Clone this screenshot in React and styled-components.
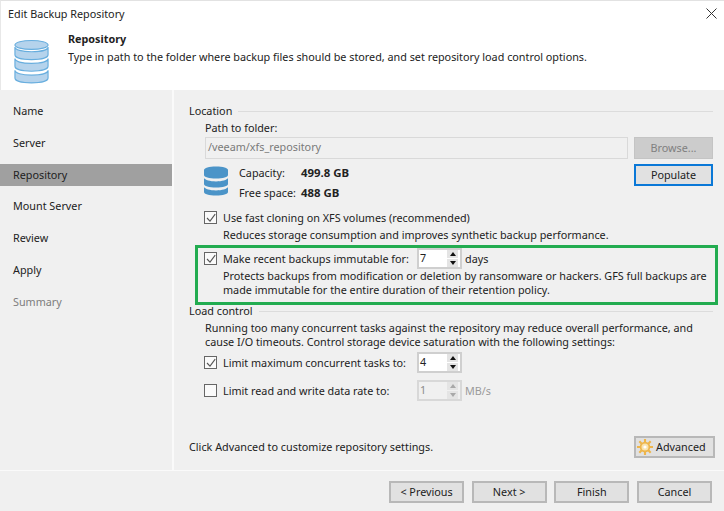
import React from "react"
import styled, { createGlobalStyle } from "styled-components"

const steps = ["Name", "Server", "Repository", "Mount Server", "Review", "Apply", "Summary"]

const DbIcon = () => (
  <svg width="37" height="45" viewBox="0 0 38 46">
    <g fill="#b5d3ec" stroke="#68aede" strokeWidth="1.2">
      <path d="M2 32v8c0 3 7 5 17 5s17-2 17-5v-8c0 3-7 5-17 5S2 35 2 32z" />
      <path d="M2 20v8c0 3 7 5 17 5s17-2 17-5v-8c0 3-7 5-17 5S2 23 2 20z" />
      <path d="M2 8v8c0 3 7 5 17 5s17-2 17-5V8c0 3-7 5-17 5S2 11 2 8z" />
      <ellipse cx="19" cy="6" rx="17" ry="4.6" />
    </g>
  </svg>
)

const SmallDb = () => (
  <svg width="24" height="30" viewBox="0 0 24 30">
    <g fill="#4b94c8">
      <path d="M0 21v5c0 2 5 3.6 12 3.6S24 28 24 26v-5c-1 2-6 3.4-12 3.4S1 23 0 21z" />
      <path d="M0 12v6c0 2 5 3.6 12 3.6S24 20 24 18v-6c-1 2-6 3.4-12 3.4S1 14 0 12z" />
      <path d="M0 4v5c0 2 5 3.6 12 3.6S24 11 24 9V4c0-2-5-3.6-12-3.6S0 2 0 4z" />
    </g>
  </svg>
)

const Gear = () => (
  <svg width="16" height="16" viewBox="0 0 24 24">
    <g stroke="#eeb54a" strokeWidth="3.2">
      <path d="M12 0v5M12 19v5M0 12h5M19 12h5M3.5 3.5l3.5 3.5M17 17l3.5 3.5M3.5 20.5L7 17M17 7l3.5-3.5" />
    </g>
    <circle cx="12" cy="12" r="6.6" fill="#f8e3b0" stroke="#eeb54a" strokeWidth="2.6" />
    <circle cx="12" cy="12" r="2.4" fill="#fff" />
  </svg>
)

const Check = ({ on }) => (
  <CheckBox>
    {on && (
      <svg width="10" height="10" viewBox="0 0 10 10">
        <path d="M1 5l3 3.2L9.2 1.2" fill="none" stroke="#555" strokeWidth="1.1" />
      </svg>
    )}
  </CheckBox>
)

const Spin = ({ value, off }) => (
  <SpinBox $off={off}>
    <SpinValue>{value}</SpinValue>
    <SpinArrows>
      <SpinArrow $off={off} $up />
      <SpinArrow $off={off} />
    </SpinArrows>
  </SpinBox>
)

export default function App() {
  return (
    <Page>
      <GlobalStyle />
      <Header>
        <TitleBar>
          <span>Edit Backup Repository</span>
          <svg width="11" height="11" viewBox="0 0 11 11">
            <path d="M.5.5l10 10M10.5.5l-10 10" stroke="#333" strokeWidth="1" />
          </svg>
        </TitleBar>
        <Banner>
          <DbIcon />
          <div>
            <BannerTitle>Repository</BannerTitle>
            <div>Type in path to the folder where backup files should be stored, and set repository load control options.</div>
          </div>
        </Banner>
      </Header>
      <Middle>
        <Sidebar>
          {steps.map((s) => (
            <Step key={s} $active={s === "Repository"} $off={s === "Summary"}>{s}</Step>
          ))}
        </Sidebar>
        <Panel>
          <Legend>Location</Legend>
          <Indent>
            <PathLabel>Path to folder:</PathLabel>
            <PathRow>
              <PathInput>/veeam/xfs_repository</PathInput>
              <Btn $off>Browse...</Btn>
            </PathRow>
            <CapacityRow>
              <SmallDb />
              <Stats>
                <div>Capacity:</div>
                <StatValue>499.8 GB</StatValue>
                <div>Free space:</div>
                <StatValue>488 GB</StatValue>
              </Stats>
              <Btn $focus>Populate</Btn>
            </CapacityRow>
            <OptionRow $top={5}>
              <Check on />
              <span>Use fast cloning on XFS volumes (recommended)</span>
            </OptionRow>
            <Hint>Reduces storage consumption and improves synthetic backup performance.</Hint>
          </Indent>
          <Highlight>
            <OptionRow $top={0}>
              <Check on />
              <OptionLabel>Make recent backups immutable for:</OptionLabel>
              <Spin value="7" />
              <Unit>days</Unit>
            </OptionRow>
            <HighlightText>
              Protects backups from modification or deletion by ransomware or hackers. GFS full backups are
              <br />
              made immutable for the entire duration of their retention policy.
            </HighlightText>
          </Highlight>
          <Legend>Load control</Legend>
          <Indent>
            <Paragraph>
              Running too many concurrent tasks against the repository may reduce overall performance, and
              <br />
              cause I/O timeouts. Control storage device saturation with the following settings:
            </Paragraph>
            <OptionRow $top={3}>
              <Check on />
              <OptionLabel>Limit maximum concurrent tasks to:</OptionLabel>
              <Spin value="4" />
            </OptionRow>
            <OptionRow $top={7}>
              <Check />
              <OptionLabel>Limit read and write data rate to:</OptionLabel>
              <Spin value="1" off />
              <Unit $off>MB/s</Unit>
            </OptionRow>
          </Indent>
          <AdvancedRow>
            <span>Click Advanced to customize repository settings.</span>
            <AdvancedBtn>
              <Gear />
              Advanced
            </AdvancedBtn>
          </AdvancedRow>
        </Panel>
      </Middle>
      <Footer>
        <Btn>&lt; Previous</Btn>
        <Btn>Next &gt;</Btn>
        <Btn>Finish</Btn>
        <Btn>Cancel</Btn>
      </Footer>
    </Page>
  )
}

const GlobalStyle = createGlobalStyle`
  html, body {
    margin: 0;
    padding: 0;
    background: #f0f0f0;
  }
`
const Page = styled.div`
  width: 724px;
  height: 511px;
  display: flex;
  flex-direction: column;
  overflow: hidden;
  font-family: "Noto Sans", "Open Sans", sans-serif;
  font-size: 10.8px;
  line-height: 14px;
  white-space: nowrap;
  color: #222;
  background: #f0f0f0;
`
const Header = styled.div`
  height: 90px;
  flex: none;
  box-sizing: border-box;
  background: #fff;
  border-top: 1px solid #e2e2e2;
  border-left: 1px solid #e8e8e8;
`
const TitleBar = styled.div`
  display: flex;
  justify-content: space-between;
  align-items: center;
  height: 27px;
  padding: 0 7px 2px 7px;
  box-sizing: border-box;
`
const Banner = styled.div`
  display: flex;
  gap: 18px;
  padding: 2px 0 0 12px;
  line-height: 18px;
  & > svg {
    margin-top: 9px;
    flex: none;
  }
`
const BannerTitle = styled.div`
  font-weight: 700;
`
const Middle = styled.div`
  flex: 1;
  display: flex;
  min-height: 0;
`
const Sidebar = styled.div`
  width: 174px;
  flex: none;
  box-sizing: border-box;
  padding-top: 10px;
  border-right: 2px solid #fafafa;
`
const Step = styled.div`
  height: 22px;
  margin-bottom: 9.8px;
  padding-left: 13px;
  line-height: 22px;
  background: ${(p) => (p.$active ? "#a0a0a0" : "transparent")};
  color: ${(p) => (p.$off ? "#7d7d7d" : "#222")};
`
const Panel = styled.div`
  flex: 1;
  display: flex;
  flex-direction: column;
  box-sizing: border-box;
  padding: 13px 11px 0 15px;
`
const Legend = styled.div`
  display: flex;
  align-items: center;
  gap: 6px;
  height: 16px;
  flex: none;
  &::after {
    content: "";
    flex: 1;
    height: 1px;
    background: #dcdcdc;
  }
`
const Indent = styled.div`
  padding-left: 16px;
`
const PathLabel = styled.div`
  margin-top: 2px;
`
const PathRow = styled.div`
  display: flex;
  gap: 6px;
  margin-top: 2px;
`
const PathInput = styled.div`
  flex: 1;
  height: 22px;
  box-sizing: border-box;
  padding-left: 2px;
  line-height: 18px;
  color: #7a7a7a;
  border: 1px solid #d9d9d9;
  background: #f0f0f0;
`
const Btn = styled.div`
  width: ${(p) => (p.$off || p.$focus ? 79 : 75)}px;
  height: 22px;
  box-sizing: border-box;
  display: flex;
  align-items: center;
  justify-content: center;
  flex: none;
  background: ${(p) => (p.$off ? "#cccccc" : "#e1e1e1")};
  color: ${(p) => (p.$off ? "#808080" : "#222")};
  border: ${(p) => (p.$focus ? "2px solid #0a78d7" : p.$off ? "1px solid #c4c4c4" : "2px solid #b8b8b8")};
`
const CapacityRow = styled.div`
  display: flex;
  align-items: flex-start;
  margin-top: 5px;
  height: 38px;
  & > svg {
    margin-top: 2px;
    margin-left: -1px;
    flex: none;
  }
`
const Stats = styled.div`
  flex: 1;
  display: grid;
  grid-template-columns: 62px 1fr;
  grid-auto-rows: 20px;
  margin: -1px 0 0 11px;
  line-height: 20px;
`
const StatValue = styled.div`
  font-size: 11.4px;
  font-weight: 700;
`
const OptionRow = styled.div`
  display: flex;
  align-items: center;
  gap: 6px;
  height: 21px;
  margin-top: ${(p) => p.$top}px;
`
const OptionLabel = styled.div`
  width: 188px;
  flex: none;
`
const Unit = styled.span`
  margin-left: -3px;
  color: ${(p) => (p.$off ? "#9a9a9a" : "#222")};
`
const CheckBox = styled.div`
  width: 13px;
  height: 13px;
  margin-left: -1px;
  box-sizing: border-box;
  flex: none;
  display: flex;
  align-items: center;
  justify-content: center;
  border: 1px solid #666;
  background: #fafafa;
`
const Hint = styled.div`
  padding-left: 18px;
`
const Highlight = styled.div`
  margin: 3px -5px -2px 6px;
  padding-left: 7px;
  height: 60px;
  flex: none;
  box-sizing: border-box;
  border: 3px solid #22ac50;
`
const HighlightText = styled.div`
  padding: 0 0 0 18px;
`
const SpinBox = styled.div`
  width: 45px;
  height: 21px;
  box-sizing: border-box;
  flex: none;
  display: flex;
  justify-content: space-between;
  padding-right: 2px;
  border: 2px solid ${(p) => (p.$off ? "#d8d8d8" : "#cfcfcf")};
  background: ${(p) => (p.$off ? "#f0f0f0" : "#fff")};
  color: ${(p) => (p.$off ? "#8a8a8a" : "#222")};
`
const SpinValue = styled.div`
  padding-left: 1px;
  line-height: 15px;
`
const SpinArrows = styled.div`
  width: 11px;
  display: flex;
  flex-direction: column;
  gap: 1px;
`
const SpinArrow = styled.div`
  flex: 1;
  display: flex;
  align-items: center;
  justify-content: center;
  background: #e4e4e4;
  &::before {
    content: "";
    border-left: 3px solid transparent;
    border-right: 3px solid transparent;
    border-${(p) => (p.$up ? "bottom" : "top")}: 4px solid ${(p) => (p.$off ? "#a8a8a8" : "#111")};
  }
`
const Paragraph = styled.div`
  margin-top: 2px;
`
const AdvancedRow = styled.div`
  display: flex;
  justify-content: space-between;
  align-items: center;
  margin-top: 35px;
  margin-right: -2px;
`
const AdvancedBtn = styled.div`
  width: 81px;
  height: 22px;
  box-sizing: border-box;
  display: flex;
  align-items: center;
  gap: 3px;
  padding-left: 1px;
  background: #e1e1e1;
  border: 2px solid #b8b8b8;
`
const Footer = styled.div`
  height: 41px;
  flex: none;
  box-sizing: border-box;
  display: flex;
  justify-content: flex-end;
  gap: 7.67px;
  padding: 10px 12px 0 0;
  border-top: 1px solid #fafafa;
`
